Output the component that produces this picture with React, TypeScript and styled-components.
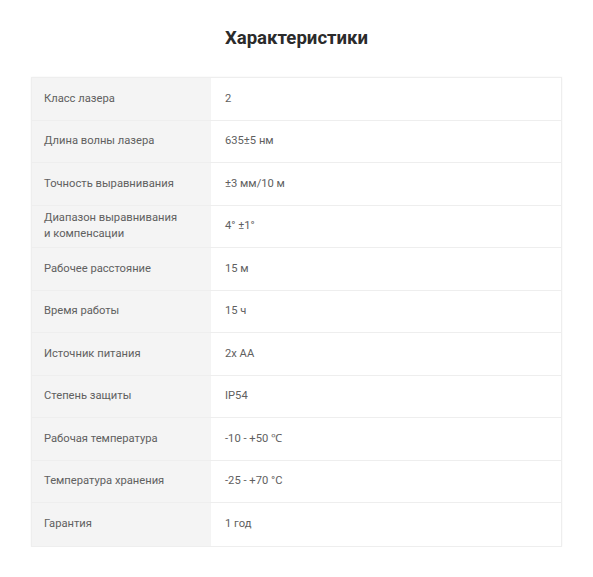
import React from "react"
import styled, { createGlobalStyle } from "styled-components"

const GlobalStyle = createGlobalStyle`
  body {
    margin: 0;
    background: #ffffff;
    font-family: Roboto, "Liberation Sans", sans-serif;
  }
`

const Page = styled.section`
  padding: 27px 31px 0 31px;
`

const Title = styled.h2`
  margin: 0 0 28px 0;
  text-align: center;
  font-size: 18.6px;
  line-height: 22px;
  font-weight: 700;
  color: #2b2b2b;
`

const Table = styled.div`
  display: grid;
  grid-template-columns: 179px 1fr;
  grid-auto-rows: 42.5px;
  border: 1px solid #eeeeee;
  box-shadow: 0 0 2px rgba(0, 0, 0, 0.05);
`

const Cell = styled.div<{ $label?: boolean; $last?: boolean }>`
  display: flex;
  align-items: center;
  font-size: 11.2px;
  line-height: 16px;
  color: #606060;
  background: ${p => (p.$label ? "#f4f4f4" : "#ffffff")};
  border-bottom: ${p => (p.$last ? "none" : "1px solid #eeeeee")};
  padding: 0 13px 0 ${p => (p.$label ? "12px" : "14px")};
`

const specs: [string, string][] = [
  ["Класс лазера", "2"],
  ["Длина волны лазера", "635±5 нм"],
  ["Точность выравнивания", "±3 мм/10 м"],
  ["Диапазон выравнивания\nи компенсации", "4° ±1°"],
  ["Рабочее расстояние", "15 м"],
  ["Время работы", "15 ч"],
  ["Источник питания", "2х АА"],
  ["Степень защиты", "IP54"],
  ["Рабочая температура", "-10 - +50 ℃"],
  ["Температура хранения", "-25 - +70 °C"],
  ["Гарантия", "1 год"],
]

const App = () => (
  <Page>
    <GlobalStyle />
    <Title>Характеристики</Title>
    <Table>
      {specs.map(([label, value], i) => {
        const last = i === specs.length - 1
        return (
          <React.Fragment key={label}>
            <Cell $label $last={last}>
              <span style={{ whiteSpace: "pre-line" }}>{label}</span>
            </Cell>
            <Cell $last={last}>{value}</Cell>
          </React.Fragment>
        )
      })}
    </Table>
  </Page>
)

export default App
